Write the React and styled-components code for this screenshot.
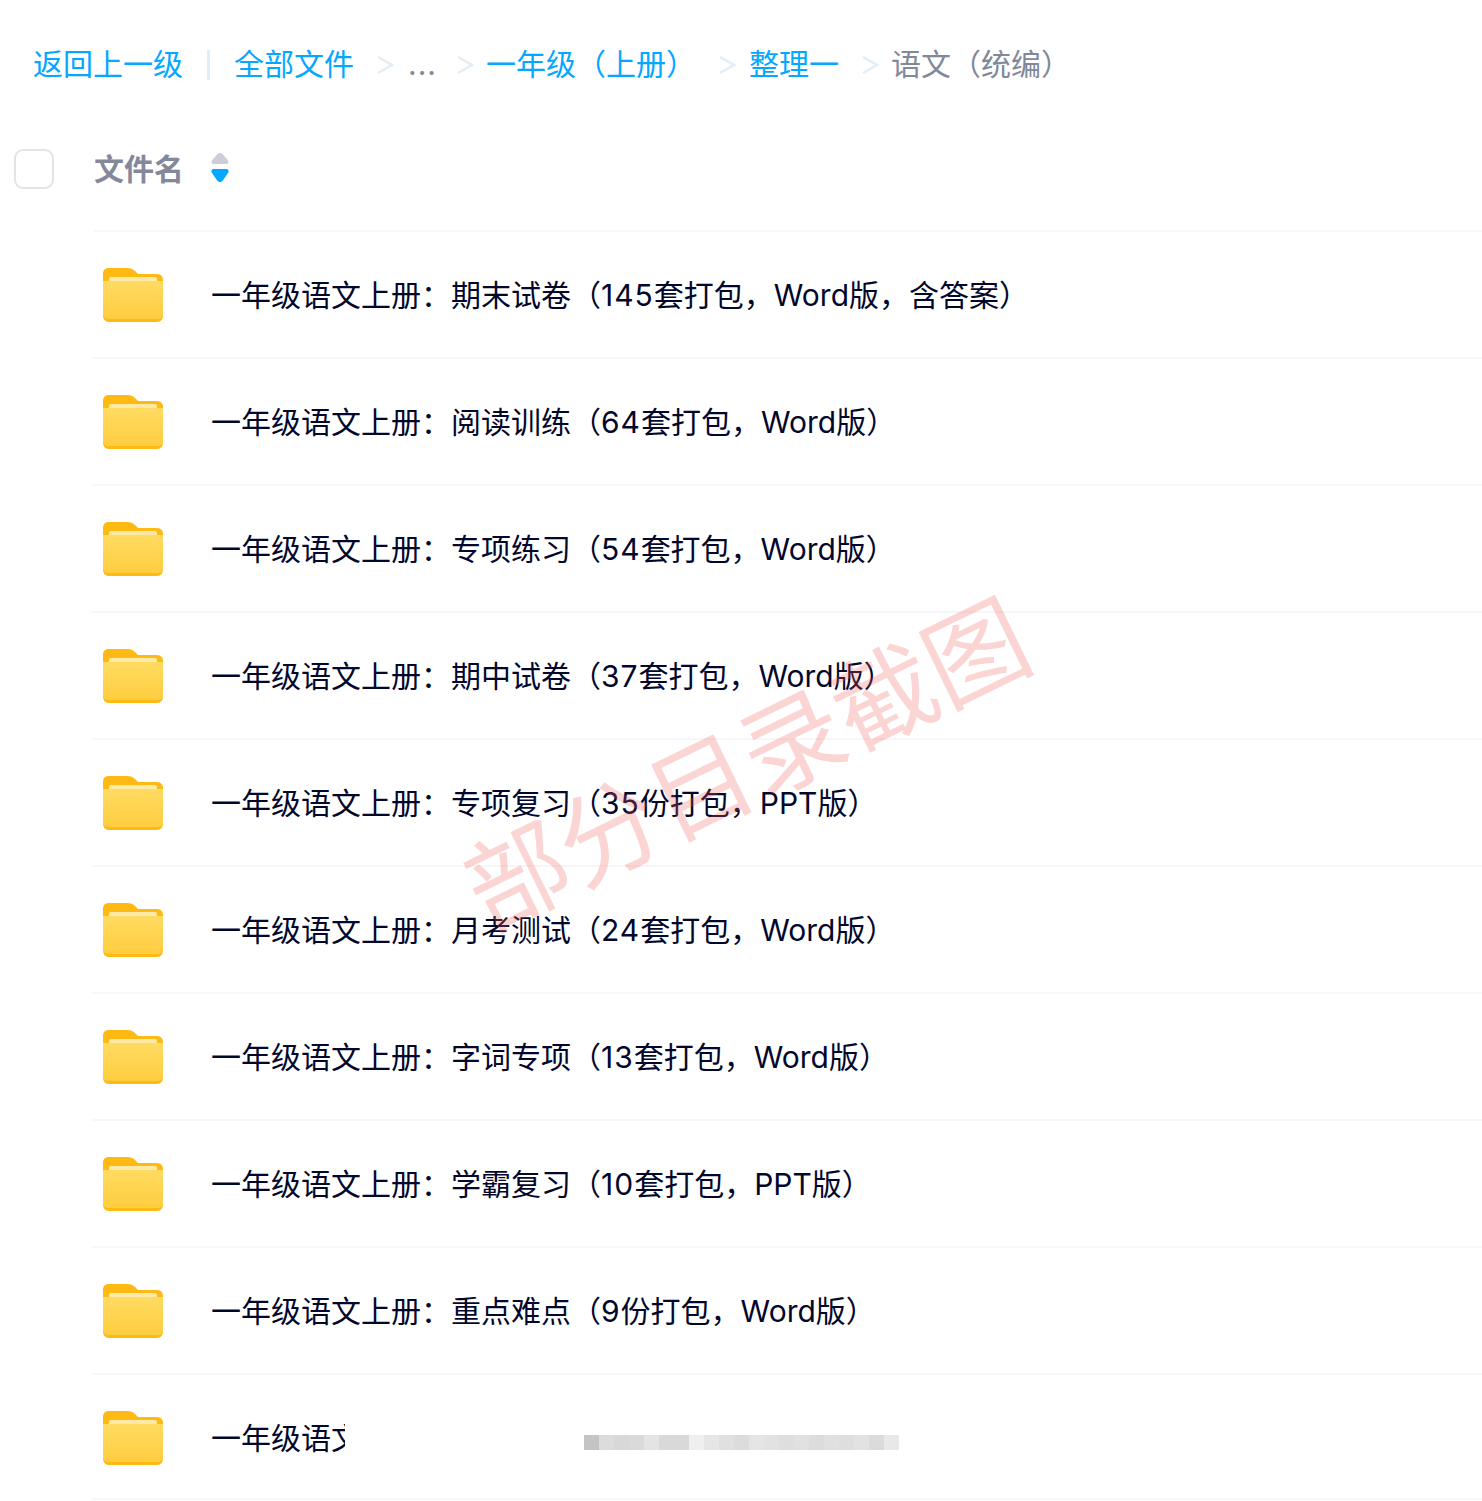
import React from "react";
import styled, { createGlobalStyle } from "styled-components";

const GlobalStyle = createGlobalStyle`
  html, body {
    margin: 0;
    background: #fff;
  }
  body {
    font-family: Inter, "Noto Sans CJK SC", sans-serif;
  }
`;

const files = [
  "一年级语文上册：期末试卷（145套打包，Word版，含答案）",
  "一年级语文上册：阅读训练（64套打包，Word版）",
  "一年级语文上册：专项练习（54套打包，Word版）",
  "一年级语文上册：期中试卷（37套打包，Word版）",
  "一年级语文上册：专项复习（35份打包，PPT版）",
  "一年级语文上册：月考测试（24套打包，Word版）",
  "一年级语文上册：字词专项（13套打包，Word版）",
  "一年级语文上册：学霸复习（10套打包，PPT版）",
  "一年级语文上册：重点难点（9份打包，Word版）",
];

const mosaic = [
  "#c4c4c4", "#dcdcdc", "#d8d8d8", "#dadada", "#e4e4e4", "#d9d9d9", "#d9d9d9",
  "#efefef", "#e6e6e6", "#e0e0e0", "#dcdcdc", "#e5e5e5", "#e2e2e2", "#dedede",
  "#e1e1e1", "#dcdcdc", "#e0e0e0", "#dedede", "#e2e2e2", "#dbdbdb", "#e8e8e8",
];

const Page = styled.div`
  position: relative;
  width: 1482px;
  height: 1501px;
  overflow: hidden;
  background: #fff;
`;

const Crumbs = styled.nav`
  display: flex;
  align-items: center;
  height: 42px;
  padding: 43px 0 0 33px;
  font-size: 30px;
  line-height: 42px;
  white-space: nowrap;
`;

const CrumbLink = styled.a`
  color: #06a7ff;
`;

const CrumbText = styled.span`
  color: #818999;
`;

const Dots = styled.span`
  width: 24px;
  color: #818999;
  font-size: 30px;
  letter-spacing: 1px;
`;

const Pipe = styled.i`
  width: 3px;
  height: 30px;
  margin: 2px 24px 0 24px;
  background: #e3edf6;
`;

const Arrow = styled.svg`
  flex: none;
  width: 17px;
  height: 20px;
  margin: 2px ${(p) => p.$right}px 0 ${(p) => p.$left}px;
  fill: none;
  stroke: #e3edf6;
  stroke-width: 2.5;
`;

const HeadRow = styled.div`
  display: flex;
  align-items: center;
  height: 40px;
  margin-top: 64px;
  padding-left: 14px;
`;

const Check = styled.span`
  box-sizing: border-box;
  width: 40px;
  height: 40px;
  border: 2px solid #e3e4ea;
  border-radius: 9px;
`;

const HeadTitle = styled.span`
  margin-left: 40px;
  color: #84889b;
  font-size: 30px;
  font-weight: 700;
  line-height: 40px;
`;

const Sort = styled.svg`
  width: 18px;
  height: 31px;
  margin: -3px 0 0 27px;
`;

const List = styled.ul`
  list-style: none;
  margin: 41px 0 0;
  padding: 0 0 0 92px;
`;

const Row = styled.li`
  box-sizing: border-box;
  display: flex;
  align-items: center;
  height: 127px;
  padding-left: 11px;
  border-top: 2px solid #f7f7fa;
  &:first-child {
    border-image: linear-gradient(to right, transparent 3px, #f7f7fa 3px) 1;
  }
  &:last-child {
    box-shadow: inset 0 -2px 0 #f7f7fa;
  }
`;

const Folder = styled.svg`
  flex: none;
  width: 60px;
  height: 54px;
  margin-top: 1px;
`;

const Name = styled.span`
  margin-left: 48px;
  color: #03072c;
  font-size: 30px;
  line-height: 42px;
  white-space: nowrap;
`;

const Num = styled.span`
  letter-spacing: 1px;
`;

const ClippedName = styled(Name)`
  width: 134px;
  overflow: hidden;
`;

const Mosaic = styled.div`
  display: flex;
  margin-left: 239px;
  margin-top: 10px;
`;

const Cell = styled.i`
  width: 15px;
  height: 15px;
  background: ${(p) => p.$c};
`;

const Watermark = styled.div`
  position: absolute;
  left: 432px;
  top: 690px;
  width: 630px;
  color: rgba(240, 90, 90, 0.26);
  font-size: 102px;
  font-weight: 400;
  line-height: 150px;
  text-align: center;
  white-space: nowrap;
  transform: rotate(-26deg);
  pointer-events: none;
`;

const FolderIcon = () => (
  <Folder viewBox="0 0 60 54">
    <defs>
      <linearGradient id="front" x1="0" y1="0" x2="0" y2="1">
        <stop offset="0" stopColor="#ffdb62" />
        <stop offset="1" stopColor="#ffcd3f" />
      </linearGradient>
    </defs>
    <path
      d="M6 0H24C28 0 30 1 32 3L35 6H54C58 6 60 9 60 12V47C60 51 58 54 54 54H6C2 54 0 51 0 47V6C0 2 2 0 6 0Z"
      fill="#feb913"
    />
    <rect x="6" y="9" width="48" height="6" rx="2" fill="#ffe9a6" />
    <path
      d="M0 13H60V46C60 49 58 51 54 51H6C2 51 0 49 0 46Z"
      fill="url(#front)"
    />
  </Folder>
);

const Sep = ({ left, right }) => (
  <Arrow viewBox="0 0 17 20" $left={left} $right={right}>
    <path d="M1 2L15 10L1 18" />
  </Arrow>
);

// digits run a little wider than Inter's in the original
const withNums = (name) =>
  name.split(/(\d+)/).map((part, i) => (i % 2 ? <Num key={i}>{part}</Num> : part));

export default function App() {
  return (
    <Page>
      <GlobalStyle />
      <Crumbs>
        <CrumbLink>返回上一级</CrumbLink>
        <Pipe />
        <CrumbLink>全部文件</CrumbLink>
        <Sep left={23} right={14} />
        <Dots>...</Dots>
        <Sep left={25} right={12} />
        <CrumbLink>一年级（上册）</CrumbLink>
        <Sep left={23} right={13} />
        <CrumbLink>整理一</CrumbLink>
        <Sep left={23} right={12} />
        <CrumbText>语文（统编）</CrumbText>
      </Crumbs>
      <HeadRow>
        <Check />
        <HeadTitle>文件名</HeadTitle>
        <Sort viewBox="0 0 18 31">
          <path d="M6.5 2C8 .5 10 .5 11.5 2L17 8.5C18 10 17.5 12 15.5 12H2.5C.5 12 0 10 1 8.5Z" fill="#cbced6" />
          <path d="M2.5 17H15.5C17.5 17 18 19.5 17 21L11.5 29C10 30.5 8 30.5 6.5 29L1 21C0 19.5 .5 17 2.5 17Z" fill="#06a7ff" />
        </Sort>
      </HeadRow>
      <List>
        {files.map((name) => (
          <Row key={name}>
            <FolderIcon />
            <Name>{withNums(name)}</Name>
          </Row>
        ))}
        <Row>
          <FolderIcon />
          <ClippedName>一年级语文上册</ClippedName>
          <Mosaic>
            {mosaic.map((c, i) => (
              <Cell key={i} $c={c} />
            ))}
          </Mosaic>
        </Row>
      </List>
      <Watermark>部分目录截图</Watermark>
    </Page>
  );
}
